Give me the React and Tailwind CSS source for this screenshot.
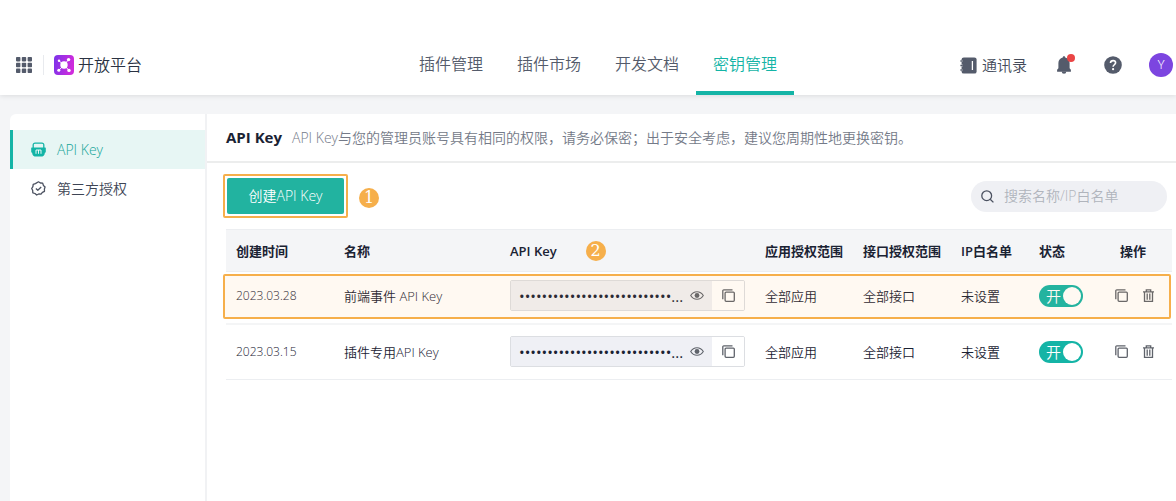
import React, { useState } from "react";

const tabs = ["插件管理", "插件市场", "开发文档", "密钥管理"];

const rows = [
  { date: "2023.03.28", name: "前端事件 API Key", highlighted: true },
  { date: "2023.03.15", name: "插件专用API Key", highlighted: false },
];

const masked = "•".repeat(27) + "...";

function GridIcon() {
  return (
    <svg className="size-4" viewBox="0 0 16 16" fill="#545b6b" aria-hidden="true">
      {[0, 5.8, 11.6].map((y) =>
        [0, 5.8, 11.6].map((x) => <rect key={`${x}-${y}`} x={x} y={y} width="4.4" height="4.4" rx="0.8" />)
      )}
    </svg>
  );
}

function Logo() {
  return (
    <svg className="size-5" viewBox="0 0 20 20" aria-hidden="true">
      <defs>
        <linearGradient id="logo" x1="0" y1="0" x2="1" y2="0.2">
          <stop offset="0" stopColor="#7a33ea" />
          <stop offset="1" stopColor="#cf2bdc" />
        </linearGradient>
      </defs>
      <rect width="20" height="20" rx="4" fill="url(#logo)" />
      <g stroke="#fff" strokeWidth="1" fill="#fff">
        <path d="M10 10 5.2 6M10 10l4.6-5.4M10 10l-5 5.2M10 10l4.8 5.2" />
        <circle cx="10" cy="10" r="3.7" stroke="none" />
        <circle cx="5" cy="5.800" r="1.200" stroke="none" />
        <circle cx="14.6" cy="4.6" r="1.700" stroke="none" />
        <circle cx="4.8" cy="15.2" r="1.500" stroke="none" />
        <circle cx="15" cy="15.4" r="1.700" stroke="none" />
      </g>
    </svg>
  );
}

function ContactsIcon() {
  return (
    <svg className="h-[17px] w-[17px]" viewBox="0 0 17 17" aria-hidden="true">
      <rect x="1.6" y="0.4" width="15" height="16.2" rx="2.2" fill="#545b6b" />
      <path d="M0 4h2.6M0 8.5h2.6M0 13h2.6" stroke="#fff" strokeWidth="2.2" />
      <path d="M0.4 4h2.4M0.4 8.5h2.4M0.4 13h2.4" stroke="#545b6b" strokeWidth="1.3" />
      <path d="M12.4 4v9" stroke="#fff" strokeWidth="1.3" />
    </svg>
  );
}

function BellIcon() {
  return (
    <svg className="h-[18px] w-[14px]" viewBox="0 0 14 18" fill="#545b6b" aria-hidden="true">
      <path d="M7 .3c.8 0 1.2.5 1.2 1.2 2.7.6 4.4 2.8 4.4 5.4v5.4l1.3 1.500v2H.1v-2l1.300-1.500V6.9c0-2.600 1.700-4.800 4.400-5.400C5.800.8 6.200.3 7 .3Z" />
      <path d="M4.7 15.5h4.600a2.300 2.300 0 0 1-4.600 0Z" />
    </svg>
  );
}

function HelpIcon() {
  return (
    <svg className="size-[18px]" viewBox="0 0 18 18" aria-hidden="true">
      <circle cx="9" cy="9" r="8.8" fill="#545b6b" />
      <path d="M6.5 7.1c0-1.600 1.100-2.500 2.600-2.500s2.500.9 2.500 2.200c0 1.900-2.500 2-2.500 3.900" fill="none" stroke="#fff" strokeWidth="1.6" />
      <circle cx="9.1" cy="13.2" r="1.1" fill="#fff" />
    </svg>
  );
}

function LockIcon() {
  return (
    <svg className="size-[15px]" viewBox="0 0 15 15" aria-hidden="true">
      <path d="M2.2 7V2.900A1.800 1.800 0 0 1 4 1.100h7a1.800 1.800 0 0 1 1.800 1.800V7" fill="none" stroke="#14b4a6" strokeWidth="1.3" />
      <path d="M.8 5.500h13.400a.6.6 0 0 1 .6.6v3.600a1 1 0 0 1-.9 1c-.2 2.500-1.700 3.900-4.200 3.900H5.300c-2.500 0-4-1.400-4.200-3.900a1 1 0 0 1-.9-1V6.100a.6.6 0 0 1 .6-.6Z" fill="#14b4a6" />
      <path d="M5 11.800V8h5v3.800M7.500 8v3.800" stroke="#fff" strokeWidth="0.9" fill="none" />
    </svg>
  );
}

function VerifyIcon() {
  return (
    <svg className="size-[15px]" viewBox="0 0 15 15" fill="none" stroke="#4b5160" strokeWidth="1.3" strokeLinejoin="round" aria-hidden="true">
      <path d="M7.500.8 9.400 2l2.300.2.7 2.200 1.700 1.500-.7 2.100.1 2.300-2.100 1-1.400 1.900-2.300-.2-2 1-1.700-1.500-2.200-.7-.1-2.300L.7 7.500l1.200-1.900.3-2.300 2.200-.7Z" />
      <path d="m4.9 7.500 1.900 1.800 3.400-3.300" />
    </svg>
  );
}

function SearchIcon() {
  return (
    <svg className="size-[13px] shrink-0" viewBox="0 0 13 13" fill="none" stroke="#4b5160" strokeWidth="1.3" aria-hidden="true">
      <circle cx="5.7" cy="5.7" r="4.9" />
      <path d="m9.2 9.2 3.2 3.2" />
    </svg>
  );
}

function EyeIcon() {
  return (
    <svg className="h-[9px] w-[14px]" viewBox="0 0 14 9" aria-hidden="true">
      <path d="M.7 4.5C2.2 2 4.4.7 7 .7s4.8 1.3 6.3 3.8C11.8 7 9.6 8.3 7 8.3S2.2 7 .7 4.5Z" fill="none" stroke="#5f636b" strokeWidth="1.1" />
      <circle cx="7" cy="4.5" r="2.4" fill="#5f636b" />
    </svg>
  );
}

function CopyIcon() {
  return (
    <svg className="size-[13px]" viewBox="0 0 13 13" fill="none" stroke="#5f636b" strokeWidth="1.3" aria-hidden="true">
      <rect x="3.1" y="3.1" width="9.2" height="9.2" rx="1" />
      <path d="M.8 10.300V1.800a1 1 0 0 1 1-1h8.700" />
    </svg>
  );
}

function TrashIcon() {
  return (
    <svg className="h-[13px] w-[11px]" viewBox="0 0 11 13" fill="none" stroke="#5f636b" strokeWidth="1.3" aria-hidden="true">
      <path d="M0 2.800h11M3.300 2.600V.8h4.400v1.800M1.500 3v9.300h8V3M4.200 4.500v6.200M6.800 4.500v6.200" />
    </svg>
  );
}

function StepBadge({ children }) {
  return (
    <span className="inline-flex size-5 items-center justify-center rounded-full bg-[#f6af4b] font-['DejaVu_Serif',serif] text-base leading-5 font-normal text-white">
      {children}
    </span>
  );
}

function KeyField({ name }) {
  return (
    <div className="flex h-[31px] w-[235px] overflow-hidden rounded-xs border border-[#dcdee2]">
      <div className="flex min-w-0 flex-1 items-center bg-[#eff0f5] pr-2 pl-2">
        <input
          type="text"
          readOnly
          value={masked}
          aria-label={`${name} 密钥`}
          className="min-w-0 flex-1 bg-transparent text-[15px] leading-5 font-medium text-[#1a2233] outline-none"
        />
        <button type="button" aria-label="显示" className="ml-1">
          <EyeIcon />
        </button>
      </div>
      <button type="button" aria-label="复制" className="flex w-8 items-center justify-center bg-white">
        <CopyIcon />
      </button>
    </div>
  );
}

function Toggle({ name }) {
  const [on, setOn] = useState(true);
  return (
    <label className="relative flex h-[22px] w-11 cursor-pointer items-center justify-between rounded-full bg-[#14b4a6] pr-0.5 pl-[7px] text-[15px] text-white">
      <input type="checkbox" className="sr-only" aria-label={`${name} 状态`} checked={on} onChange={() => setOn(!on)} />
      <span className="leading-5">{on ? "开" : "关"}</span>
      <span className="size-[18px] rounded-full bg-white" />
    </label>
  );
}

function Header() {
  return (
    <header className="relative grid grid-cols-[402fr_auto_382fr] bg-white pt-[35px] shadow-[0_1px_5px_rgba(0,0,0,0.10)]">
      <div className="flex items-center pl-4">
        <button type="button" aria-label="应用列表"><GridIcon /></button>
        <span className="ml-[11px] h-5 w-px bg-[#e8eaee]" />
        <a href="#home" className="ml-2.5 flex items-center gap-1 text-base text-[#2a3242]">
          <Logo />
          开放平台
        </a>
      </div>
      <nav className="flex">
        {tabs.map((tab, i) => (
          <a
            key={tab}
            href={`#tab-${i}`}
            className={
              i === 3
                ? "border-b-4 border-[#14b4a6] px-[17px] pt-[17px] pb-[15px] text-base text-[#14b4a6]"
                : "border-b-4 border-transparent px-[17px] pt-[17px] pb-[15px] text-base text-[#545b6b]"
            }
          >
            {tab}
          </a>
        ))}
      </nav>
      <div className="flex items-center justify-end pr-[3px]">
        <a href="#contacts" className="flex items-center gap-[5px] text-[15px] text-[#444b5a]">
          <ContactsIcon />
          通讯录
        </a>
        <button type="button" aria-label="通知" className="relative ml-[30px]">
          <BellIcon />
          <span className="absolute -top-0.5 -right-1 size-2 rounded-full bg-[#ea4545]" />
        </button>
        <button type="button" aria-label="帮助" className="ml-[33px]"><HelpIcon /></button>
        <button type="button" aria-label="账号" className="ml-[27px] flex size-6 items-center justify-center rounded-full bg-[#7c45e0] font-['Roboto',sans-serif] text-xs text-white">
          Y
        </button>
      </div>
    </header>
  );
}

function Sidebar() {
  return (
    <aside className="w-[197px] shrink-0 border-r-2 border-[#f1f2f4] pt-4">
      <a href="#api-key" className="flex h-[39px] items-center gap-[11px] border-l-3 border-[#14b4a6] bg-[#e7f6f4] pl-[18px] text-sm text-[#14a598]">
        <LockIcon />
        API Key
      </a>
      <a href="#third-party" className="flex h-[39px] items-center gap-[11px] border-l-3 border-transparent pl-[18px] text-sm text-[#3d4454]">
        <VerifyIcon />
        第三方授权
      </a>
    </aside>
  );
}

function KeyTable() {
  return (
    <table className="w-full table-fixed border-collapse text-left text-[13px] leading-5 text-[#1a2233]">
      <colgroup>
        <col className="w-[108px]" />
        <col className="w-[166px]" />
        <col className="w-[255px]" />
        <col className="w-[98px]" />
        <col className="w-[98px]" />
        <col className="w-[78px]" />
        <col className="w-[65px]" />
        <col className="w-[78px]" />
      </colgroup>
      <thead>
        <tr className="h-[42px] border-y border-[#eceef1] bg-[#f4f5f7] whitespace-nowrap [&>th]:font-semibold">
          <th className="pl-2.5">创建时间</th>
          <th className="pl-2.5">名称</th>
          <th className="pl-2.5">
            <div className="flex items-center gap-[29px]">
              <span>API Key</span>
              <StepBadge>2</StepBadge>
            </div>
          </th>
          <th className="pl-2.5">应用授权范围</th>
          <th className="pl-2.5">接口授权范围</th>
          <th className="pl-2.5">IP白名单</th>
          <th className="pl-2.5">状态</th>
          <th className="text-center">操作</th>
        </tr>
      </thead>
      <tbody>
        {rows.map((row) => (
          <tr
            key={row.date}
            className={
              row.highlighted
                ? "relative h-[52px] border-b-2 border-[#f4f5f6] whitespace-nowrap [&>td]:pb-[3px]"
                : "h-14 border-b border-[#eceef1] whitespace-nowrap"
            }
          >
            <td className="pl-2.5 text-xs leading-5">{row.date}</td>
            <td className="pl-2.5">{row.name}</td>
            <td className="pl-2.5"><KeyField name={row.name} /></td>
            <td className="pl-2.5">全部应用</td>
            <td className="pl-2.5">全部接口</td>
            <td className="pl-2.5">未设置</td>
            <td className="pl-2.5"><Toggle name={row.name} /></td>
            <td>
              <div className="flex items-center justify-center gap-[15px] pl-[3px]">
                <button type="button" aria-label="复制"><CopyIcon /></button>
                <button type="button" aria-label="删除"><TrashIcon /></button>
              </div>
              {row.highlighted && (
                <span className="pointer-events-none absolute top-0.5 right-px bottom-[3px] -left-[3px] rounded-xs border-2 border-[#f6af4b] bg-[#f9ae40]/7" />
              )}
            </td>
          </tr>
        ))}
      </tbody>
    </table>
  );
}

export default function App() {
  return (
    <div className="flex min-h-screen flex-col bg-[#f4f5f7] font-['Open_Sans','Noto_Sans_CJK_SC',sans-serif] font-[350]">
      <Header />
      <div className="mt-[19px] ml-2.5 flex flex-1 rounded-tl-md bg-white">
        <Sidebar />
        <main className="min-w-0 flex-1">
          <div className="flex h-[49px] items-center gap-2.5 border-b-2 border-[#eceded] pl-[19px] whitespace-nowrap">
            <h1 className="text-[15px] font-bold text-[#1a2233]">API Key</h1>
            <p className="text-sm text-[#747a88]">
              API Key与您的管理员账号具有相同的权限，请务必保密；出于安全考虑，建议您周期性地更换密钥。
            </p>
          </div>
          <div className="flex items-center pt-[11px] pr-[9px] pl-4">
            <div className="rounded-xs border-2 border-[#f6af4b] p-0.5">
              <button type="button" className="h-9 w-[117px] rounded-xs bg-[#22b3a0] text-sm text-white">
                创建API Key
              </button>
            </div>
            <span className="mt-1 ml-[11px] flex"><StepBadge>1</StepBadge></span>
            <label className="ml-auto flex h-[31px] w-[196px] items-center gap-[10px] rounded-full bg-[#eff0f4] pr-3 pl-2.5">
              <SearchIcon />
              <input
                type="search"
                aria-label="搜索"
                placeholder="搜索名称/IP白名单"
                className="min-w-0 flex-1 bg-transparent text-sm outline-none placeholder:text-[#b0b4bc]"
              />
            </label>
          </div>
          <div className="mt-[11px] pr-1 pl-[19px]">
            <KeyTable />
          </div>
        </main>
      </div>
    </div>
  );
}
